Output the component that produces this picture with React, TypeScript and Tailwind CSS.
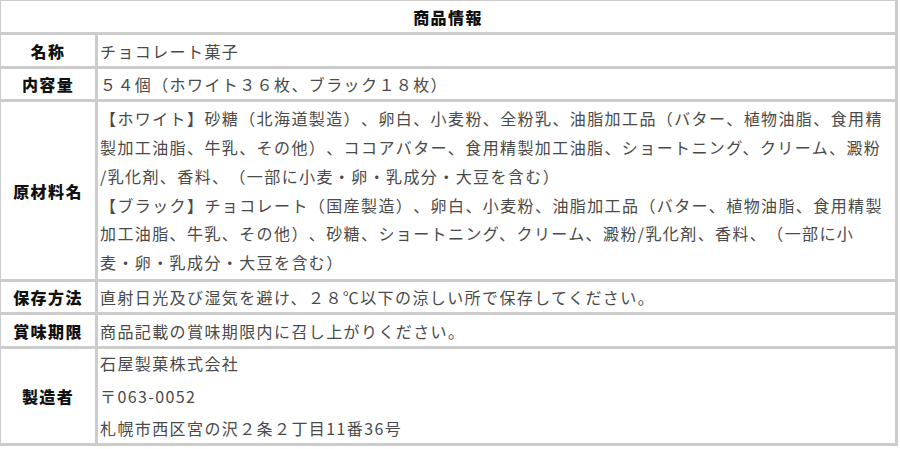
import React from "react";

const font = { fontFamily: '"Noto Sans CJK JP", "Noto Sans", sans-serif' };

function Label({ children }: { children: React.ReactNode }) {
  return (
    <div className="bg-white flex items-center justify-center font-black text-[16px] tracking-[1.4px] text-[#111]">
      {children}
    </div>
  );
}

export default function App() {
  return (
    <div className="w-[900px] h-[449px] bg-white overflow-hidden [text-spacing-trim:space-all]" style={font}>
      <div className="w-[898px] bg-[#cccccc] grid grid-cols-[94px_1fr] gap-[3px] pt-[1px] pl-[1px] pr-[3px] pb-[3px]">
        <div className="col-span-2 h-[31px] bg-white flex items-center justify-center font-black text-[16px] tracking-[1.4px] text-[#111]">
          商品情報
        </div>

        <Label>名称</Label>
        <div className="h-[31px] bg-white flex items-center pl-[2px] text-[16px] tracking-[1.4px] text-[#4a4a4a] whitespace-nowrap">
          チョコレート菓子
        </div>

        <Label>内容量</Label>
        <div className="h-[30px] bg-white flex items-center pl-[2px] text-[16px] tracking-[1.4px] text-[#4a4a4a] whitespace-nowrap">
          ５４個（ホワイト３６枚、ブラック１８枚）
        </div>

        <Label>原材料名</Label>
        <div className="h-[177px] bg-white flex flex-col justify-center pl-[2px] text-[16px] leading-[28.8px] tracking-[1.4px] text-[#4a4a4a] whitespace-nowrap">
          <div>【ホワイト】砂糖（北海道製造）、卵白、小麦粉、全粉乳、油脂加工品（バター、植物油脂、食用精</div>
          <div>製加工油脂、牛乳、その他）、ココアバター、食用精製加工油脂、ショートニング、クリーム、澱粉</div>
          <div>/乳化剤、香料、（一部に小麦・卵・乳成分・大豆を含む）</div>
          <div>【ブラック】チョコレート（国産製造）、卵白、小麦粉、油脂加工品（バター、植物油脂、食用精製</div>
          <div>加工油脂、牛乳、その他）、砂糖、ショートニング、クリーム、澱粉/乳化剤、香料、（一部に小</div>
          <div>麦・卵・乳成分・大豆を含む）</div>
        </div>

        <Label>保存方法</Label>
        <div className="h-[30px] bg-white flex items-center pl-[2px] text-[16px] tracking-[1.4px] text-[#4a4a4a] whitespace-nowrap">
          直射日光及び湿気を避け、２８℃以下の涼しい所で保存してください。
        </div>

        <Label>賞味期限</Label>
        <div className="h-[31px] bg-white flex items-center pl-[2px] text-[16px] tracking-[1.4px] text-[#4a4a4a] whitespace-nowrap">
          商品記載の賞味期限内に召し上がりください。
        </div>

        <Label>製造者</Label>
        <div className="h-[94px] bg-white flex flex-col justify-between pl-[2px] text-[16px] leading-[28.8px] tracking-[1.4px] text-[#4a4a4a] whitespace-nowrap">
          <div>石屋製菓株式会社</div>
          <div>〒063-0052</div>
          <div>札幌市西区宮の沢２条２丁目11番36号</div>
        </div>
      </div>
    </div>
  );
}
